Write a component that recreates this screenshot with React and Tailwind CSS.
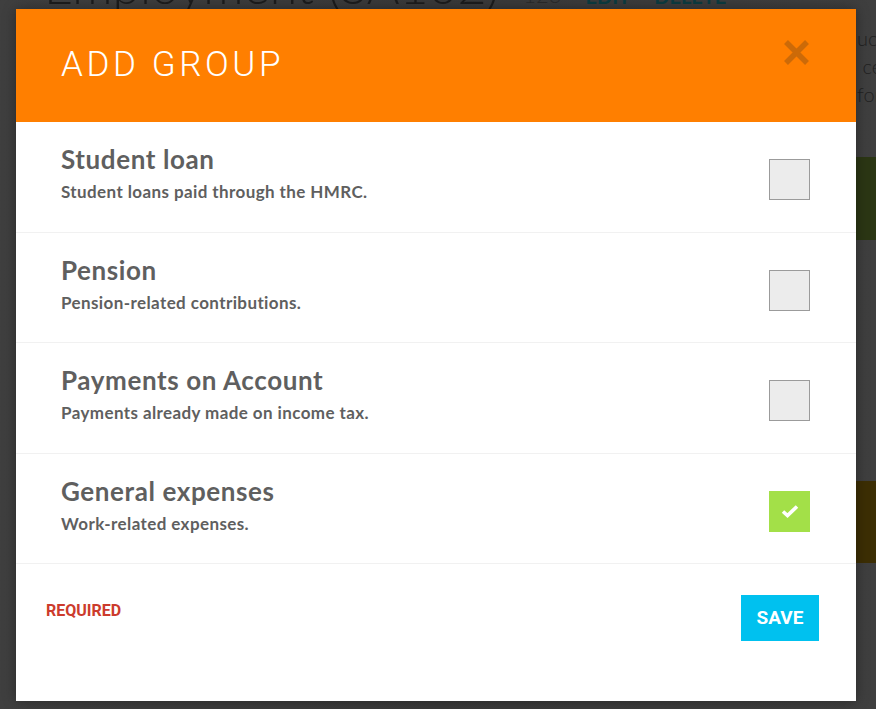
import React from "react";

const rows = [
  { t: "Student loan", d: "Student loans paid through the HMRC.", c: false },
  { t: "Pension", d: "Pension-related contributions.", c: false },
  { t: "Payments on Account", d: "Payments already made on income tax.", c: false },
  { t: "General expenses", d: "Work-related expenses.", c: true },
];

export default function App() {
  return (
    <div className="relative w-[876px] h-[709px] overflow-hidden bg-[#3c3c3c]" style={{ fontFamily: "Lato, 'Open Sans', sans-serif" }}>
      {/* background page (dimmed) */}
      <div className="absolute inset-0 bg-gradient-to-r from-[#3f3f3f] via-[#393939] to-[#3f3f3f]">
        <div className="flex items-end gap-6 pl-[44px] -mt-[30px] h-[40px]">
          <span className="text-[50px] leading-none text-[#1c1c1c] font-light" style={{ fontFamily: "Lato, sans-serif" }}>Employment (SA102)</span>
          <span className="text-[22px] leading-none text-[#2a2a2a] font-light pb-1">123</span>
          <span className="text-[20px] leading-none text-[#0b3b40] font-bold pb-1">EDIT</span>
          <span className="text-[20px] leading-none text-[#0b3b40] font-bold pb-1">DELETE</span>
        </div>
        <div className="absolute left-[857px] top-[27px] flex flex-col gap-[6px] text-[20px] leading-[22px] text-[#222] font-light">
          <span>uc</span>
          <span>&nbsp;ce</span>
          <span>for</span>
        </div>
        <div className="absolute left-[856px] top-[157px] w-[20px] h-[83px] bg-[#2b3614]" />
        <div className="absolute left-[856px] top-[481px] w-[20px] h-[82px] bg-[#3c2e04]" />
      </div>

      {/* modal */}
      <div className="absolute left-[16px] top-[9px] w-[840px] h-[692px] bg-white shadow-[0_0_12px_rgba(0,0,0,0.35)] flex flex-col">
        <div className="h-[113px] bg-[#ff7f00] flex items-center justify-between pl-[45px] pr-[46px]">
          <h1 className="text-[35px] text-white tracking-[3.6px]" style={{ fontFamily: "Roboto, sans-serif", fontWeight: 300 }}>ADD GROUP</h1>
          <svg width="27" height="27" viewBox="0 0 27 27" className="-mt-[27px]">
            <path d="M3 3 L24 24 M24 3 L3 24" stroke="#cc6a08" strokeWidth="5.5" strokeLinecap="butt" />
          </svg>
        </div>
        {rows.map((r, i) => (
          <div key={i} className="h-[110.5px] border-b border-[#f1f1f1] flex items-start justify-between pl-[45px] pr-[46px] pt-[21px]">
            <div className="flex flex-col text-[#5f5f5f]">
              <span className="text-[26px] font-bold leading-[32px] tracking-[0.6px]">{r.t}</span>
              <span className="text-[17px] font-bold leading-[21px] mt-[6px] tracking-[0.4px]">{r.d}</span>
            </div>
            {r.c ? (
              <div className="w-[41px] h-[41px] mt-[16px] bg-[#a3e048] flex items-center justify-center">
                <svg width="20" height="16" viewBox="0 0 20 16">
                  <path d="M3 8.5 L7.5 12.5 L17 3.5" stroke="white" strokeWidth="3.6" fill="none" />
                </svg>
              </div>
            ) : (
              <div className="w-[41px] h-[41px] mt-[16px] bg-[#ececec] border border-[#9b9b9b]" />
            )}
          </div>
        ))}
        <div className="flex items-start justify-between pl-[30px] pr-[37px] pt-[31px]">
          <span className="text-[16px] font-bold text-[#cc3b2c] mt-[4px]" style={{ fontFamily: "Roboto, sans-serif", fontWeight: 700 }}>REQUIRED</span>
          <button className="w-[78px] h-[46px] bg-[#00c1ef] text-white text-[19px] font-bold" style={{ fontFamily: "Roboto, sans-serif" }}>SAVE</button>
        </div>
      </div>
    </div>
  );
}
